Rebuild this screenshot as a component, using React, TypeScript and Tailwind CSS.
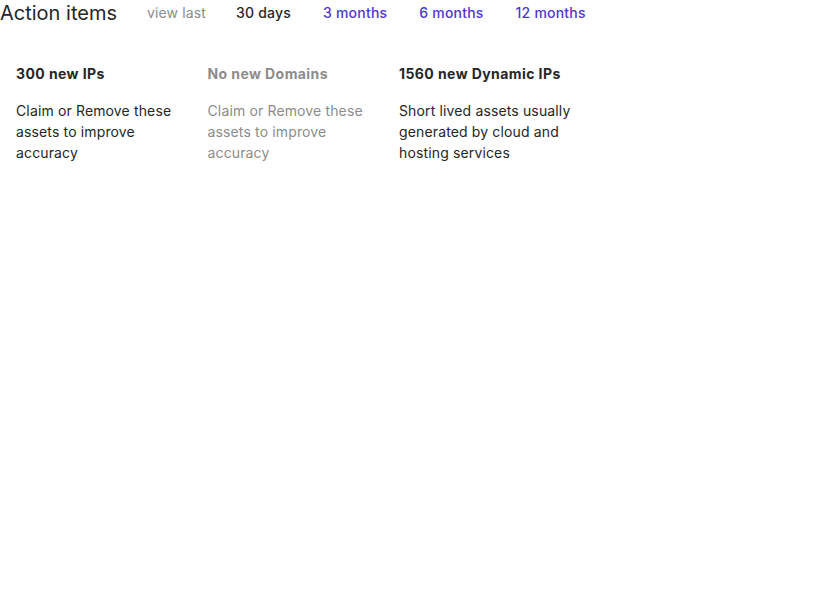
import React from 'react';

const ranges = [
  { label: '30 days', active: true },
  { label: '3 months', active: false },
  { label: '6 months', active: false },
  { label: '12 months', active: false },
];

const items = [
  { title: '300 new IPs', text: 'Claim or Remove these assets to improve accuracy', muted: false },
  { title: 'No new Domains', text: 'Claim or Remove these assets to improve accuracy', muted: true },
  { title: '1560 new Dynamic IPs', text: 'Short lived assets usually generated by cloud and hosting services', muted: false },
];

export default function App() {
  return (
    <div className="min-h-screen bg-white font-['Inter',sans-serif] text-[#262626]">
      <div className="flex h-[26px] items-center">
        <h2 className="text-xl leading-6 text-[#262626]">Action items</h2>
        <span className="ml-[30px] text-sm tracking-[0.01em] text-[#8c8c8c]">view last</span>
        <div className="ml-[14px] flex items-center">
          {ranges.map((r) => (
            <button
              key={r.label}
              className={`px-4 text-sm font-medium tracking-[0.015em] ${r.active ? 'text-[#262626]' : 'text-[#4f35d2]'}`}
            >
              {r.label}
            </button>
          ))}
        </div>
      </div>

      <div className="mt-[22px] flex">
        {items.map((it) => (
          <div key={it.title} className="w-[191.5px] py-4 pl-4">
            <h3 className={`mb-4 text-sm font-bold leading-5 tracking-[0.03em] ${it.muted ? 'text-[#8c8c8c]' : 'text-[#262626]'}`}>
              {it.title}
            </h3>
            <p className={`text-sm leading-[21px] tracking-[0.01em] ${it.muted ? 'text-[#8c8c8c]' : 'text-[#262626]'}`}>{it.text}</p>
          </div>
        ))}
      </div>
    </div>
  );
}
